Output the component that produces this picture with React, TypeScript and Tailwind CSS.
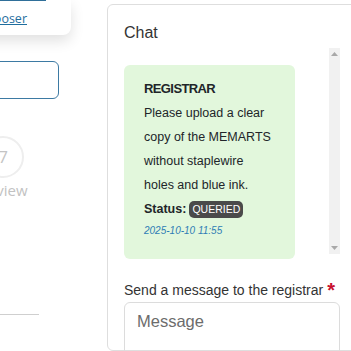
import React from 'react';

const SANS = "font-['Segoe_UI','Liberation_Sans',Arial,sans-serif]";

const StepperSide = () => (
  <div className="relative w-[90px] shrink-0 overflow-hidden font-['Open_Sans',sans-serif]">
    {/* upload card, cut off on the left */}
    <div className="-ml-[140px] w-[211px] h-[35px] rounded-br-lg bg-white shadow-[0_6px_14px_rgba(0,0,0,0.12)] relative">
      <div className="absolute top-0 right-[25px] left-0 h-px bg-[#2f6f99]" />
      <div className="absolute top-[10px] right-[44px] text-[12.5px] text-[#1f6e9e] underline">
        Choose file chooser
      </div>
    </div>
    {/* search input */}
    <div className="mt-[26px] -ml-[100px] w-[159px] h-[38px] rounded-md border border-[#3d7aa3]" />
    {/* step circle */}
    <div className="mt-[37px] -ml-[18px] flex flex-col items-center w-[42px]">
      <div className="w-[42px] h-[42px] rounded-full border-2 border-[#eeeeee] flex items-center justify-center text-[17px] text-[#c4c4c4]">
        7
      </div>
      <div className="mt-[3px] text-[15px] leading-[18px] text-[#c2c2c2] whitespace-nowrap">Review</div>
    </div>
    {/* divider */}
    <div className="mt-[115px] -ml-[60px] w-[99px] h-px bg-[#cfcfcf]" />
  </div>
);

const Scrollbar = () => (
  <div className="w-[11px] shrink-0 bg-[#f1f1f1] flex flex-col justify-between items-center py-[4px]">
    <svg width="7" height="4" viewBox="0 0 7 4">
      <path d="M0 4 L3.5 0 L7 4 Z" fill="#a8a8a8" />
    </svg>
    <svg width="7" height="4" viewBox="0 0 7 4">
      <path d="M0 0 L3.5 4 L7 0 Z" fill="#a8a8a8" />
    </svg>
  </div>
);

const Bubble = () => (
  <div className={`w-[171px] rounded-md bg-[#e2f7dc] pl-[20px] pr-[22px] pt-[12px] pb-[18px] text-[12.5px] leading-[24px] text-[#212529] ${SANS}`}>
    <div className="font-bold text-[13px] tracking-[-0.6px]">REGISTRAR</div>
    <div>Please upload a clear copy of the MEMARTS without staplewire holes and blue ink.</div>
    <div className="flex items-center gap-[3px]">
      <span className="font-bold">Status:</span>
      <span className="rounded-[5px] bg-[#4a4a4a] px-[3px] text-[10.5px] leading-[17px] text-white">QUERIED</span>
    </div>
    <div className="text-[10px] italic leading-[20px] text-[#2f7db5]">2025-10-10 11:55</div>
  </div>
);

export default function App() {
  return (
    <div className="w-[351px] h-[351px] overflow-hidden bg-white flex">
      <StepperSide />
      <div className="ml-[17px] mt-[4px] w-[260px] shrink-0 rounded-md border border-[#dedede] pl-[16px] pr-[10px] pt-[16px]">
        <div className={`text-[16px] leading-[24px] text-[#333] ${SANS}`}>Chat</div>
        <div className="mt-[3px] flex h-[206px] w-[216px] justify-between">
          <div className="pt-[17px]">
            <Bubble />
          </div>
          <Scrollbar />
        </div>
        <div className={`mt-[26px] text-[14px] leading-[20px] text-[#333] ${SANS}`}>
          Send a message to the registrar{' '}
          <span className="relative top-[2px] font-bold text-[#c8102e] text-[20px] leading-[10px]">*</span>
        </div>
        <div className={`mt-[2px] h-[80px] w-[216px] rounded-md border border-[#dcdcdc] px-[12px] pt-[6px] text-[16.5px] text-[#6c6c6c] ${SANS}`}>
          Message
        </div>
      </div>
    </div>
  );
}
